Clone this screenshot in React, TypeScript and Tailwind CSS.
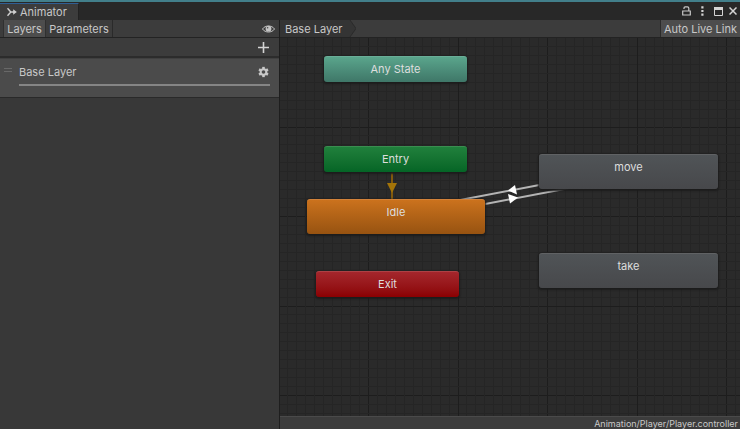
import clsx from "clsx"

const GRID = 179
const minorLines = Array.from({ length: 20 }, (_, i) => Math.round((i * GRID) / 20))

const nodes = [
	{ name: "Any State", className: "left-[44px] top-[18px] w-[143px] h-[26px] bg-linear-to-b from-[#5aa58c] to-[#3f7768] border-t-[#6aae98]" },
	{ name: "Entry", className: "left-[44px] top-[108px] w-[143px] h-[26px] bg-linear-to-b from-[#20803c] to-[#056526] border-t-[#3a8e50]" },
	{ name: "Idle", className: "left-[27px] top-[161px] w-[178px] h-[35px] bg-linear-to-b from-[#cb721d] to-[#975311] border-t-[#d2823a]" },
	{ name: "Exit", className: "left-[36px] top-[233px] w-[143px] h-[26px] bg-linear-to-b from-[#a4262c] to-[#8b0002] border-t-[#ad4145]" },
	{ name: "move", className: "left-[259px] top-[116px] w-[179px] h-[35px] bg-linear-to-b from-[#505457] to-[#47484b] border-t-[#606264]" },
	{ name: "take", className: "left-[259px] top-[215px] w-[179px] h-[35px] bg-linear-to-b from-[#505457] to-[#47484b] border-t-[#606264]" },
]

const AnimatorIcon = () => (
	<svg className="w-[10px] h-[10px]" viewBox="0 0 10 10" fill="none" stroke="#d0d0d0" strokeWidth="1.4">
		<path d="M0.5 1.2 L3.8 5 H8 M0.5 8.8 L3.8 5" />
		<path d="M6.2 2.2 L9.8 5 L6.2 7.8 Z" fill="#d0d0d0" stroke="none" />
	</svg>
)

const LockIcon = () => (
	<svg className="w-[9px] h-[10px]" viewBox="0 0 9 10" fill="none" stroke="#c8c8c8" strokeWidth="1.2">
		<path d="M2 3 V2 Q2 0.8 3.2 0.8 H5.4 Q6.8 0.8 6.8 2.2 V5" />
		<path d="M0.7 5 H8.3 V9 H0.7 Z" />
	</svg>
)

const DotsIcon = () => (
	<svg className="w-[3px] h-[10px]" viewBox="0 0 3 10" fill="#d4d4d4">
		<path d="M0.3 0.3 h2.2 v2.2 h-2.2z M0.3 3.9 h2.2 v2.2 h-2.2z M0.3 7.5 h2.2 v2.2 h-2.2z" />
	</svg>
)

const MaximizeIcon = () => (
	<svg className="w-[9px] h-[9px]" viewBox="0 0 9 9" fill="none" stroke="#d4d4d4">
		<path d="M0.5 0.5 H8.5 V8.5 H0.5 Z" />
		<path d="M0 1.5 H9" strokeWidth="3" />
	</svg>
)

const CloseIcon = () => (
	<svg className="w-[8px] h-[8px]" viewBox="0 0 8 8" stroke="#d4d4d4" strokeWidth="1.5">
		<path d="M0.5 0.5 L7.5 7.5 M7.5 0.5 L0.5 7.5" />
	</svg>
)

const EyeIcon = () => (
	<svg className="w-[13px] h-[8px]" viewBox="0 0 13 8">
		<path d="M0.5 4 C3 0 10 0 12.5 4 C10 8 3 8 0.5 4 Z" fill="#3c3c3c" stroke="#c4c4c4" />
		<circle cx="6.5" cy="3.7" r="2.9" fill="#c4c4c4" />
		<circle cx="5.6" cy="2.8" r="0.8" fill="#4a4a4a" />
	</svg>
)

const PlusIcon = () => (
	<svg className="w-[11px] h-[11px]" viewBox="0 0 11 11" stroke="#d4d4d4" strokeWidth="1.6">
		<path d="M5.5 0 V11 M0 5.5 H11" />
	</svg>
)

const GearIcon = () => (
	<svg className="w-[11px] h-[12px]" viewBox="0 0 12 12">
		<g stroke="#c8c8c8" strokeWidth="2.8">
			<path d="M6 0.4 V11.6" />
			<path d="M6 0.4 V11.6" transform="rotate(60 6 6)" />
			<path d="M6 0.4 V11.6" transform="rotate(120 6 6)" />
		</g>
		<circle cx="6" cy="6" r="4.2" fill="#c8c8c8" />
		<circle cx="6" cy="6" r="2" fill="#4a4a4a" />
	</svg>
)

const Header = () => (
	<header className="flex h-5 shrink-0 items-stretch justify-between border-t-2 border-[#427f8b] bg-[#282828]">
		<div className="mt-px flex w-[79px] items-center gap-[3px] border-t border-r border-t-[#2f5f94] border-r-[#222222] bg-[#3c3c3c] pl-[7px]">
			<AnimatorIcon />
			<h1>Animator</h1>
		</div>
		<div className="flex items-center pr-[3px]">
			<button aria-label="Lock" className="mr-[10px]"><LockIcon /></button>
			<button aria-label="Menu" className="mr-[10px]"><DotsIcon /></button>
			<button aria-label="Maximize" className="mr-[6px]"><MaximizeIcon /></button>
			<button aria-label="Close"><CloseIcon /></button>
		</div>
	</header>
)

const Sidebar = () => (
	<aside className="flex w-[280px] shrink-0 flex-col border-r border-[#1e1e1e] bg-[#383838]">
		<div className="flex h-[18px] items-stretch border-b border-[#232323] bg-[#3c3c3c] pl-[3px]">
			<button className="w-[43px] border-x border-[#303030] bg-[#4d4d4d]">Layers</button>
			<button className="w-[67px] border-r border-[#2a2a2a]">Parameters</button>
			<button aria-label="Toggle sidebar" className="mr-1 ml-auto"><EyeIcon /></button>
		</div>
		<div className="flex h-5 items-center justify-end border-b-2 border-[#2c2c2c] bg-[#3c3c3c] pr-[10px]">
			<button aria-label="Add layer"><PlusIcon /></button>
		</div>
		<div className="flex h-10 flex-col border-y border-t-[#404040] border-b-[#292929] bg-[#4b4b4b] pt-[5px] pr-[9px] pl-1">
			<div className="flex h-4 items-center">
				<span className="mb-1 h-1 w-2 border-y border-[#686868]" />
				<span className="ml-[7px]">Base Layer</span>
				<button aria-label="Layer settings" className="mr-px ml-auto"><GearIcon /></button>
			</div>
			<div className="mt-1 ml-[15px] h-[2px] bg-[#858585]" />
		</div>
	</aside>
)

const Graph = () => (
	<div className="relative min-h-0 flex-1 overflow-hidden bg-[#2a2a2a]">
		<svg className="absolute inset-0 h-full w-full">
			<defs>
				<pattern id="grid" x="88" y="-1" width={GRID} height={GRID} patternUnits="userSpaceOnUse">
					{minorLines.map((p, i) => (
						<g key={p} fill={i % 10 === 0 ? "#1d1d1d" : "#252525"}>
							<rect x={p} width="1" height={GRID} />
							<rect y={p} width={GRID} height="1" />
						</g>
					))}
				</pattern>
			</defs>
			<rect width="100%" height="100%" fill="url(#grid)" />
			<path d="M112 130 V165" stroke="#80590d" strokeWidth="2" />
			<path d="M107 145 H117 L112 155 Z" fill="#a37408" />
			<g stroke="#b4b4b4" strokeWidth="2">
				<path d="M175 163 L275 144" />
				<path d="M200 167 L300 148" />
			</g>
			<path d="M228 152.5 L235 147 L237 156.5 Z M238 159.5 L228 156 L230 165.5 Z" fill="#fff" />
		</svg>
		{nodes.map((n) => (
			<div key={n.name} className={clsx("absolute flex justify-center rounded-[3px] border-t pt-1 text-[#dedede] shadow-[0_1px_2px_1px_#1c1c1c]", n.className)}>
				{n.name}
			</div>
		))}
	</div>
)

export default function App() {
	return (
		<div className="flex h-screen flex-col overflow-hidden bg-[#383838] font-['Inter',sans-serif] text-[11px] leading-4 text-[#c8c8c8]">
			<Header />
			<div className="flex min-h-0 flex-1">
				<Sidebar />
				<main className="flex min-w-0 flex-1 flex-col">
					<nav className="flex h-[18px] shrink-0 items-stretch justify-between border-b border-[#232323] bg-[#3c3c3c]">
						<div className="flex">
							<button className="bg-[#343434] pr-1 pl-[5px]">Base Layer</button>
							<svg className="h-[17px] w-[10px]" viewBox="0 0 10 17">
								<path d="M0 0 H4 L10 8.5 L4 17 H0 Z" fill="#343434" />
								<path d="M4 0 L10 8.5 L4 17" fill="none" stroke="#2b2b2b" />
							</svg>
						</div>
						<button className="border-l border-[#2b2b2b] bg-[#4d4d4d] px-[3px]">Auto Live Link</button>
					</nav>
					<Graph />
					<footer className="shrink-0 border-t border-[#4a4a4a] bg-[#3c3c3c] pt-px pr-[2px] text-right text-[9px] leading-[11px]">
						Animation/Player/Player.controller
					</footer>
				</main>
			</div>
		</div>
	)
}
